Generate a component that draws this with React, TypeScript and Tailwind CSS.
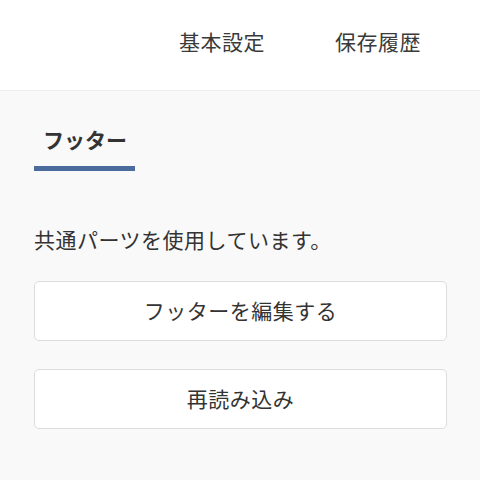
export default function App() {
  return (
    <div
      className="flex flex-col min-h-screen bg-[#f9f9f9] text-[#333]"
      style={{ fontFamily: '"Noto Sans CJK JP", "Noto Sans", sans-serif' }}
    >
      <header className="h-[91px] bg-white border-b border-[#f0f0f0] flex justify-end items-start pt-[26px] pr-[59px] gap-[70px] text-[21px] leading-[30px] tracking-[0.5px] text-[#3a3a3a]">
        <span>基本設定</span>
        <span>保存履歴</span>
      </header>

      <main className="flex-1 pl-[34px] pr-[33px] pt-[33px]">
        <div className="flex">
          <div className="pl-[9px] pr-[8px] pb-[12px] border-b-[5px] border-[#4a6b9b] text-[21px] leading-[30px] font-bold text-[#333]">
            フッター
          </div>
        </div>

        <p className="mt-[53px] text-[21px] leading-[30px] tracking-[0.5px] text-[#333]">
          共通パーツを使用しています。
        </p>

        <div className="mt-[27px] flex flex-col gap-[28px]">
          <button className="h-[60px] w-full bg-white border border-[#dcdcdc] rounded-[5px] text-[21px] tracking-[0.5px] text-[#333]">
            フッターを編集する
          </button>
          <button className="h-[60px] w-full bg-white border border-[#dcdcdc] rounded-[5px] text-[21px] tracking-[0.5px] text-[#333]">
            再読み込み
          </button>
        </div>
      </main>
    </div>
  )
}
